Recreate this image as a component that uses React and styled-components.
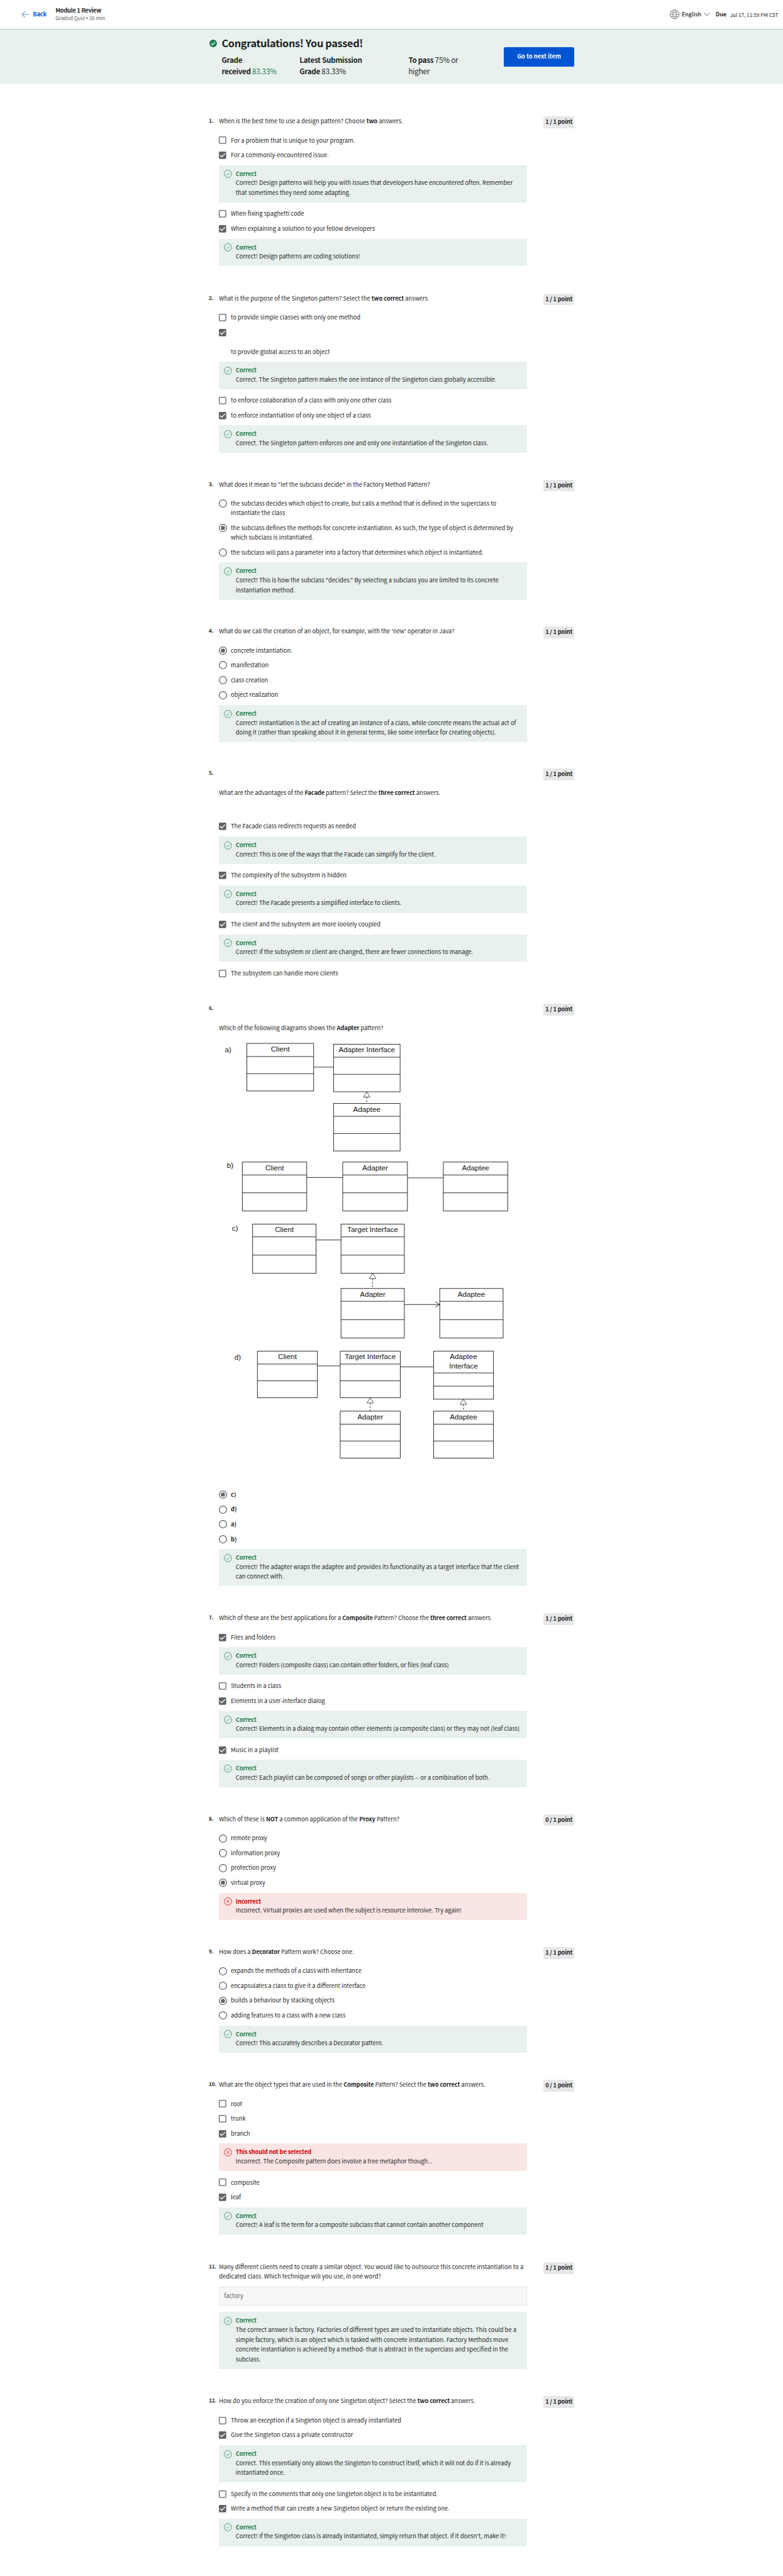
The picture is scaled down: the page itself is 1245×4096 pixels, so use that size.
import React from "react";
import styled, { createGlobalStyle, css } from "styled-components";

/* 1rem is ten design pixels; the page is drawn at 0.6484 of its design size. */
const GlobalStyle = createGlobalStyle`
  html { font-size: 6.484375px; }
  *, *::before, *::after { box-sizing: border-box; }
  body {
    margin: 0;
    background: #fff;
    color: #1f1f1f;
    font-family: "Noto Sans CJK SC", "Noto Sans", sans-serif;
    font-size: 1.44rem;
    line-height: 2.4rem;
  }
  p, h1, h2 { margin: 0; font: inherit; }
`;

const Page = styled.div`
  width: 100%;
  height: 631.5rem;
  overflow: hidden;
`;

/* ---------- top bar ---------- */

const TopBar = styled.header`
  display: flex;
  align-items: center;
  justify-content: space-between;
  height: 7.25rem;
  padding: 0 1.1rem 0 5.3rem;
  border-bottom: 1px solid #c1c1c1;
`;

const TopLeft = styled.div`
  display: flex;
  align-items: center;
`;

const BackLink = styled.a`
  display: flex;
  align-items: center;
  width: 8.3rem;
  gap: 0.95rem;
  color: #0056d2;
  font-size: 1.44rem;
  font-weight: 700;
  letter-spacing: -0.025rem;
`;

const ModuleTitle = styled.h2`
  font-size: 1.44rem;
  font-weight: 700;
  line-height: 2rem;
  letter-spacing: -0.045rem;
`;

const ModuleMeta = styled.p`
  color: #636363;
  font-size: 1.26rem;
  line-height: 1.9rem;
  white-space: nowrap;
`;

const Dot = styled.span`
  font-family: "Liberation Sans", sans-serif;
`;

const TopRight = styled.div`
  display: flex;
  align-items: center;
`;

const Language = styled.div`
  display: flex;
  align-items: center;
  gap: 0.55rem;
  width: 11.3rem;
  font-size: 1.38rem;
  font-weight: 500;
`;

const DueLabel = styled.b`
  width: 3.5rem;
  font-size: 1.38rem;
`;

const DueDate = styled.span`
  width: 11.9rem;
  padding-top: 0.1rem;
  font-size: 1.255rem;
  white-space: nowrap;
`;

/* ---------- result banner ---------- */

const Banner = styled.section`
  display: flex;
  height: 13.25rem;
  padding: 0 51.2rem 0 51.3rem;
  background: #e8f1ee;
`;

const BannerIcon = styled.div`
  width: 3.06rem;
  padding-top: 2.52rem;
`;

const BannerBody = styled.div`
  flex: 1;
  padding-top: 1.6rem;
`;

const BannerTitle = styled.h1`
  font-size: 2.52rem;
  font-weight: 700;
  line-height: 3.6rem;
  letter-spacing: -0.053rem;
`;

const Grades = styled.div`
  display: grid;
  grid-template-columns: 19.1rem 26.7rem 14rem;
  margin-top: 0.8rem;
`;

const Grade = styled.p`
  font-size: 1.8rem;
  line-height: 2.8rem;
  letter-spacing: -0.03rem;
  white-space: nowrap;
  color: ${(p) => (p.$passed ? "#1d7c4d" : "inherit")};

  b { color: #1f1f1f; letter-spacing: -0.05rem; }
`;

const NextButton = styled.button`
  align-self: flex-start;
  width: 17.2rem;
  height: 4.8rem;
  margin-top: 4.3rem;
  padding: 0 0 0.15rem;
  border: 0;
  border-radius: 0.4rem;
  background: #0056d2;
  color: #fff;
  font: 700 1.44rem/2.4rem "Noto Sans CJK SC", sans-serif;
`;

/* ---------- questions ---------- */

const Quiz = styled.main`
  width: 89.6rem;
  margin: 0 auto;
  padding-top: 8.02rem;
`;

const QuestionBlock = styled.section`
  display: grid;
  grid-template-columns: 2.5rem 75.6rem 7.5rem;
  align-content: start;
  height: ${(p) => p.$height}rem;
`;

const Number = styled.div`
  font-size: 1.27rem;
  font-weight: 700;
  line-height: 2.1rem;
  letter-spacing: -0.02rem;
  white-space: nowrap;
`;

const Points = styled.div`
  justify-self: end;
  width: 7.5rem;
  height: 2.9rem;
  margin-right: -4rem;
  border-radius: 0.4rem;
  background: #e5e7e8;
  font-weight: 700;
  line-height: 2.72rem;
  letter-spacing: -0.035rem;
  text-align: center;
  white-space: nowrap;
`;

const Prompt = styled.div`
  padding-top: ${(p) => p.$lead || 0}rem;
  padding-bottom: ${(p) => (p.$after === undefined ? 1.7 : p.$after)}rem;
  white-space: nowrap;

  b { letter-spacing: -0.018rem; }
`;

const OptionRow = styled.div`
  display: flex;
  align-items: flex-start;
  min-height: 3.64rem;
  padding: 0.62rem 0 0.6rem;
  white-space: nowrap;
`;

const Mark = styled.span`
  flex: none;
  display: flex;
  justify-content: center;
  align-items: center;
  width: 1.8rem;
  height: 2.4rem;
  margin-right: 1.1rem;
`;

const OptionLabel = styled.div`
  padding-top: ${(p) => (p.$spaced ? 4.75 : 0)}rem;
  font-weight: ${(p) => (p.$bold ? 700 : 400)};
`;

const tones = {
  good: css`background: #e8f1ee; --tone: #1d7c4d;`,
  bad: css`background: #fae5e5; --tone: #d30001;`,
};

const FeedbackBox = styled.div`
  display: flex;
  gap: 0.95rem;
  margin: ${(p) => (p.$flush ? 0 : 0.6)}rem 0 1rem;
  padding: 1.1rem 1.2rem 1.16rem;
  white-space: nowrap;
  ${(p) => tones[p.$tone]}
`;

const ToneMark = styled.div`
  padding-top: 0.1rem;
`;

const FeedbackTitle = styled.div`
  color: var(--tone);
  font-weight: 700;
  line-height: 2.1rem;
  letter-spacing: -0.025rem;
`;

const AnswerField = styled.div`
  height: 4.55rem;
  margin-bottom: 1.6rem;
  padding: 0 1.1rem;
  border: 1px solid #e3e4e6;
  background: #f5f7f8;
  color: #636363;
  line-height: 4.2rem;
`;

const Icon = styled.svg`
  display: block;
  flex: none;
  width: ${(p) => p.$w}rem;
  height: ${(p) => p.$h || p.$w}rem;
  overflow: visible;
`;

/* ---------- icons ---------- */

const ArrowLeft = () => (
  <Icon $w={1.8} viewBox="0 0 18 18" fill="none" stroke="#0056d2" strokeWidth="1.3">
    <path d="M9 1.4L1.4 9 9 16.6" />
    <path d="M17.8 9H2" strokeOpacity="0.75" />
  </Icon>
);

const Globe = () => (
  <Icon $w={2.4} viewBox="0 0 24 24" fill="none" stroke="#555" strokeWidth="1.1">
    <circle cx="12" cy="12" r="11.2" />
    <path d="M12 .8C6 5.500 6 18.500 12 23.200M12 .8c6 4.700 6 17.700 0 22.400" />
    <path d="M1 12h22M3 5.600c5 1.700 13 1.700 18 0M3 18.400c5-1.700 13-1.700 18 0" />
  </Icon>
);

const Chevron = () => (
  <Icon $w={1.5} $h={0.8} viewBox="0 0 15 8" fill="none" stroke="#333" strokeWidth="1.3">
    <path d="M.5.5l7 7 7-7" />
  </Icon>
);

const PassedIcon = () => (
  <Icon $w={1.85} viewBox="0 0 18 18">
    <circle cx="9" cy="9" r="9" fill="#1d7c4d" />
    <path d="M4.500 9.400l3 3 6-6.600" fill="none" stroke="#fff" strokeWidth="1.9" />
  </Icon>
);

const Checkbox = ({ checked }) => (
  <Icon $w={1.8} viewBox="0 0 18 18">
    <rect x="1" y="1" width="16" height="16" rx="1.2" fill={checked ? "#636363" : "#fff"} stroke="#636363" strokeWidth="2" />
    {checked && <path d="M2.600 9l4.300 4.200 8.500-8.400" fill="none" stroke="#fff" strokeWidth="2" />}
  </Icon>
);

const Radio = ({ checked }) => (
  <Icon $w={2} viewBox="0 0 20 20">
    <circle cx="10" cy="10" r="9" fill="#fff" stroke="#636363" strokeWidth="2" />
    {checked && <circle cx="10" cy="10" r="5" fill="#636363" />}
  </Icon>
);

const ToneIcon = ({ tone }) => (
  <Icon $w={1.95} viewBox="0 0 20 20" fill="none" stroke="var(--tone)" strokeWidth="1.2">
    <circle cx="10" cy="10" r="9.3" />
    {tone === "good" ? <path d="M5.400 10.200l3.200 3.200 5.600-6.400" /> : <path d="M5.800 5.800l8.400 8.400M14.200 5.800l-8.400 8.400" />}
  </Icon>
);

/* ---------- class diagrams of question 6 ---------- */

const classBoxes = [
  { x1: 605.7, x2: 769.4, ys: [2558.6, 2590.8, 2632.7, 2675.3], name: ["Client"] },
  { x1: 818.2, x2: 981.4, ys: [2560.6, 2592.4, 2634.4, 2677.2], name: ["Adapter Interface"] },
  { x1: 818.2, x2: 981.4, ys: [2705.7, 2737.3, 2779.5, 2822.3], name: ["Adaptee"] },
  { x1: 594.6, x2: 752.5, ys: [2849.5, 2881.2, 2925, 2969.3], name: ["Client"] },
  { x1: 840.7, x2: 999.4, ys: [2849.5, 2881.2, 2925, 2969.3], name: ["Adapter"] },
  { x1: 1087.5, x2: 1245.4, ys: [2849.5, 2881.2, 2925, 2969.3], name: ["Adaptee"] },
  { x1: 619.8, x2: 775.2, ys: [3001.6, 3033, 3077.8, 3122.4], name: ["Client"] },
  { x1: 836.5, x2: 991.8, ys: [3001.6, 3033, 3077.8, 3122.4], name: ["Target Interface"] },
  { x1: 836.5, x2: 991.8, ys: [3159.6, 3191, 3236, 3280.9], name: ["Adapter"] },
  { x1: 1078.6, x2: 1234, ys: [3159.6, 3191, 3236, 3280.9], name: ["Adaptee"] },
  { x1: 631.5, x2: 778.6, ys: [3313.1, 3344.9, 3386, 3427.3], name: ["Client"] },
  { x1: 834.5, x2: 981.8, ys: [3313.1, 3344.9, 3386, 3427.3], name: ["Target Interface"] },
  { x1: 1063.5, x2: 1210.4, ys: [3313.1, 3366.7, 3399, 3431], name: ["Adaptee", "Interface"] },
  { x1: 834.5, x2: 981.8, ys: [3460.4, 3492.3, 3533.6, 3575.5], name: ["Adapter"] },
  { x1: 1063.5, x2: 1210.4, ys: [3460.4, 3492.3, 3533.6, 3575.5], name: ["Adaptee"] },
];

const links = [
  [769.4, 818.2, 2616.8],
  [752.5, 840.7, 2887.4],
  [999.4, 1087.5, 2888.3],
  [775.2, 836.5, 3040.6],
  [991.8, 1078.6, 3198.9],
  [778.6, 834.5, 3349.4],
  [981.8, 1063.5, 3351.8],
];

const realizations = [
  [899.7, 2677.2, 2705.7],
  [914.1, 3122.4, 3159.6],
  [908, 3427.3, 3460.4],
  [1136.6, 3431, 3460.4],
];

const letters = [
  ["a)", 551.8, 2580.6],
  ["b)", 556.5, 2863.9],
  ["c)", 569, 3017.4],
  ["d)", 575.2, 3334.8],
];

const DiagramCanvas = styled.svg`
  display: block;
  width: 75.6rem;
  height: 111.32rem;
  font-family: "Liberation Sans", Arial, sans-serif;
  font-size: 18px;
`;

const Diagrams = () => (
  <DiagramCanvas viewBox="537 2533.8 756 1113.2" fill="none" stroke="#111" strokeWidth="1.35">
    {classBoxes.map(({ x1, x2, ys, name }, i) => (
      <g key={i}>
        <rect x={x1} y={ys[0]} width={x2 - x1} height={ys[3] - ys[0]} />
        <path d={`M${x1} ${ys[1]}H${x2}M${x1} ${ys[2]}H${x2}`} />
        {name.map((line, n) => (
          <text key={line} x={(x1 + x2) / 2} y={ys[0] + 20.2 + n * 21.8} textAnchor="middle" fill="#111" stroke="none">
            {line}
          </text>
        ))}
      </g>
    ))}
    {links.map(([a, b, y]) => (
      <path key={y} d={`M${a} ${y}H${b}`} />
    ))}
    <path d="M1067.5 3192.300l11.200 6.600-11.200 6.600" />
    {realizations.map(([x, tip, end]) => (
      <g key={tip}>
        <path d={`M${x} ${tip}l-7.800 13h15.600z`} strokeWidth="1.1" />
        <path d={`M${x} ${tip + 13}V${end}`} strokeDasharray="4 4" />
      </g>
    ))}
    {letters.map(([t, x, y]) => (
      <text key={t} x={x} y={y} fill="#111" stroke="none">{t}</text>
    ))}
  </DiagramCanvas>
);

/* ---------- quiz content ---------- */

const opt = (label, checked, extra) => ({ label, checked, ...extra });
const good = (...lines) => ({ tone: "good", title: "Correct", lines });
const bad = (title, ...lines) => ({ tone: "bad", title, lines });

const questions = [
  {
    height: 43.44,
    prompt: <>When is the best time to use a design pattern? Choose <b>two</b> answers.</>,
    items: [
      opt("For a problem that is unique to your program."),
      opt("For a commonly-encountered issue.", true),
      good("Correct! Design patterns will help you with issues that developers have encountered often. Remember", "that sometimes they need some adapting."),
      opt("When fixing spaghetti code"),
      opt("When explaining a solution to your fellow developers", true),
      good("Correct! Design patterns are coding solutions!"),
    ],
  },
  {
    height: 45.66,
    prompt: <>What is the purpose of the Singleton pattern? Select the <b>two correct</b> answers.</>,
    items: [
      opt("to provide simple classes with only one method"),
      opt("to provide global access to an object", true, { spaced: true }),
      good("Correct. The Singleton pattern makes the one instance of the Singleton class globally accessible."),
      opt("to enforce collaboration of a class with only one other class"),
      opt("to enforce instantiation of only one object of a class", true),
      good("Correct. The Singleton pattern enforces one and only one instantiation of the Singleton class."),
    ],
  },
  {
    height: 35.98,
    radio: true,
    after: 1.62,
    prompt: <>What does it mean to "let the subclass decide" in the Factory Method Pattern?</>,
    items: [
      opt(<>the subclass decides which object to create, but calls a method that is defined in the superclass to<br />instantiate the class</>),
      opt(<>the subclass defines the methods for concrete instantiation. As such, the type of object is determined by<br />which subclass is instantiated.</>, true),
      opt("the subclass will pass a parameter into a factory that determines which object is instantiated."),
      good('Correct! This is how the subclass "decides." By selecting a subclass you are limited to its concrete', "instantiation method."),
    ],
  },
  {
    height: 34.91,
    radio: true,
    prompt: <>What do we call the creation of an object, for example, with the 'new' operator in Java?</>,
    items: [
      opt("concrete instantiation.", true),
      opt("manifestation"),
      opt("class creation"),
      opt("object realization"),
      good("Correct! Instantiation is the act of creating an instance of a class, while concrete means the actual act of", "doing it (rather than speaking about it in general terms, like some interface for creating objects)."),
    ],
  },
  {
    height: 57.67,
    lead: 4.8,
    after: 5.16,
    prompt: <>What are the advantages of the <b>Facade</b> pattern? Select the <b>three correct</b> answers.</>,
    items: [
      opt("The Facade class redirects requests as needed", true),
      good("Correct! This is one of the ways that the Facade can simplify for the client."),
      opt("The complexity of the subsystem is hidden", true),
      good("Correct! The Facade presents a simplified interface to clients."),
      opt("The client and the subsystem are more loosely coupled", true),
      good("Correct! If the subsystem or client are changed, there are fewer connections to manage."),
      opt("The subsystem can handle more clients"),
    ],
  },
  {
    height: 149.4,
    radio: true,
    bold: true,
    lead: 4.75,
    after: 0.05,
    diagram: true,
    prompt: <>Which of the following diagrams shows the <b>Adapter</b> pattern?</>,
    items: [
      opt("c)", true),
      opt("d)"),
      opt("a)"),
      opt("b)"),
      good("Correct! The adapter wraps the adaptee and provides its functionality as a target interface that the client", "can connect with."),
    ],
  },
  {
    height: 49.3,
    prompt: <>Which of these are the best applications for a <b>Composite</b> Pattern? Choose the <b>three correct</b> answers.</>,
    items: [
      opt("Files and folders", true),
      good("Correct! Folders (composite class) can contain other folders, or files (leaf class)"),
      opt("Students in a class"),
      opt("Elements in a user-interface dialog", true),
      good("Correct! Elements in a dialog may contain other elements (a composite class) or they may not (leaf class)"),
      opt("Music in a playlist", true),
      good("Correct! Each playlist can be composed of songs or other playlists -- or a combination of both."),
    ],
  },
  {
    height: 32.62,
    radio: true,
    points: 0,
    prompt: <>Which of these is <b>NOT</b> a common application of the <b>Proxy</b> Pattern?</>,
    items: [
      opt("remote proxy"),
      opt("information proxy"),
      opt("protection proxy"),
      opt("virtual proxy", true),
      bad("Incorrect", "Incorrect. Virtual proxies are used when the subject is resource intensive. Try again!"),
    ],
  },
  {
    height: 32.5,
    radio: true,
    after: 1.62,
    prompt: <>How does a <b>Decorator</b> Pattern work? Choose one.</>,
    items: [
      opt("expands the methods of a class with inheritance"),
      opt("encapsulates a class to give it a different interface"),
      opt("builds a behaviour by stacking objects", true),
      opt("adding features to a class with a new class"),
      good("Correct! This accurately describes a Decorator pattern."),
    ],
  },
  {
    height: 44.69,
    points: 0,
    prompt: <>What are the object types that are used in the <b>Composite</b> Pattern? Select the <b>two correct</b> answers.</>,
    items: [
      opt("root"),
      opt("trunk"),
      opt("branch", true),
      bad("This should not be selected", "Incorrect. The Composite pattern does involve a tree metaphor though..."),
      opt("composite"),
      opt("leaf", true),
      good("Correct! A leaf is the term for a composite subclass that cannot contain another component"),
    ],
  },
  {
    height: 32.91,
    after: 1.33,
    answer: "factory",
    prompt: <>Many different clients need to create a similar object. You would like to outsource this concrete instantiation to a<br />dedicated class. Which technique will you use, in one word?</>,
    items: [
      good(
        "The correct answer is factory. Factories of different types are used to instantiate objects. This could be a",
        "simple factory, which is an object which is tasked with concrete instantiation. Factory Methods move",
        "concrete instantiation is achieved by a method- that is abstract in the superclass and specified in the",
        "subclass."
      ),
    ],
  },
  {
    height: 43.9,
    prompt: <>How do you enforce the creation of only one Singleton object? Select the <b>two correct</b> answers.</>,
    items: [
      opt("Throw an exception if a Singleton object is already instantiated"),
      opt("Give the Singleton class a private constructor", true),
      good("Correct. This essentially only allows the Singleton to construct itself, which it will not do if it is already", "instantiated once."),
      opt("Specify in the comments that only one Singleton object is to be instantiated."),
      opt("Write a method that can create a new Singleton object or return the existing one.", true),
      good("Correct! If the Singleton class is already instantiated, simply return that object. If it doesn't, make it!"),
    ],
  },
];

const Feedback = ({ tone, title, lines, flush }) => (
  <FeedbackBox $tone={tone} $flush={flush}>
    <ToneMark><ToneIcon tone={tone} /></ToneMark>
    <div>
      <FeedbackTitle>{title}</FeedbackTitle>
      {lines.map((line) => <p key={line}>{line}</p>)}
    </div>
  </FeedbackBox>
);

const Option = ({ label, checked, radio, bold, spaced }) => (
  <OptionRow>
    <Mark>{radio ? <Radio checked={checked} /> : <Checkbox checked={checked} />}</Mark>
    <OptionLabel $bold={bold} $spaced={spaced}>{label}</OptionLabel>
  </OptionRow>
);

const Question = ({ index, q }) => (
  <QuestionBlock $height={q.height}>
    <Number>{index + 1}.</Number>
    <div>
      <Prompt $lead={q.lead} $after={q.after}>{q.prompt}</Prompt>
      {q.diagram && <Diagrams />}
      {q.answer && <AnswerField>{q.answer}</AnswerField>}
      {q.items.map((item, i) =>
        item.tone
          ? <Feedback key={i} {...item} flush={Boolean(q.answer)} />
          : <Option key={i} {...item} radio={q.radio} bold={q.bold} />
      )}
    </div>
    <Points>{q.points === 0 ? 0 : 1} / 1 point</Points>
  </QuestionBlock>
);

export default function App() {
  return (
    <Page>
      <GlobalStyle />
      <TopBar>
        <TopLeft>
          <BackLink><ArrowLeft />Back</BackLink>
          <div>
            <ModuleTitle>Module 1 Review</ModuleTitle>
            <ModuleMeta>Graded Quiz <Dot>•</Dot> 30 min</ModuleMeta>
          </div>
        </TopLeft>
        <TopRight>
          <Language><Globe />English<Chevron /></Language>
          <DueLabel>Due</DueLabel>
          <DueDate>Jul 17, 11:59 PM CST</DueDate>
        </TopRight>
      </TopBar>
      <Banner>
        <BannerIcon><PassedIcon /></BannerIcon>
        <BannerBody>
          <BannerTitle>Congratulations! You passed!</BannerTitle>
          <Grades>
            <Grade $passed><b>Grade<br />received</b> 83.33%</Grade>
            <Grade><b>Latest Submission<br />Grade</b> 83.33%</Grade>
            <Grade><b>To pass</b> 75% or<br />higher</Grade>
          </Grades>
        </BannerBody>
        <NextButton>Go to next item</NextButton>
      </Banner>
      <Quiz>
        {questions.map((q, i) => <Question key={i} index={i} q={q} />)}
      </Quiz>
    </Page>
  );
}
